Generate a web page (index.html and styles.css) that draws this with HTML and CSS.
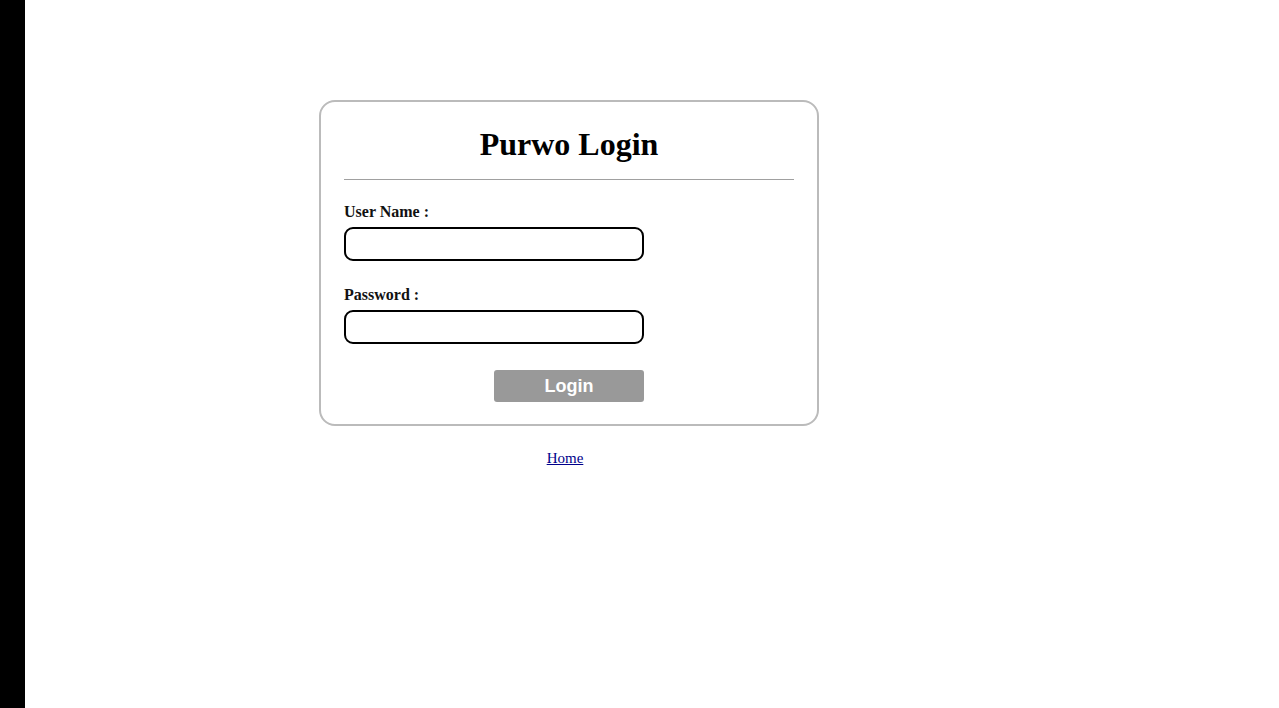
FILE: index.html
```html
<!DOCTYPE html>
<html>
<head>
<meta charset="utf-8">
<title>Purwo Login</title>
<link rel="stylesheet" href="styles.css">
</head>
<body>
<div class="frame">
  <div class="side"></div>
  <main class="main">
    <form class="card" action="#">
      <h1 class="title">Purwo Login</h1>
      <hr class="rule">
      <label class="label" for="user">User Name :</label>
      <input class="field" id="user" type="text">
      <label class="label label-pass" for="pass">Password :</label>
      <input class="field" id="pass" type="password">
      <div class="actions"><button class="btn" type="button">Login</button></div>
    </form>
    <div class="links"><a class="home" href="#">Home</a></div>
  </main>
</div>
</body>
</html>
```
FILE: styles.css
```css
html, body {
  margin: 0;
  padding: 0;
  background: #fff;
  font-family: "Liberation Serif", "Times New Roman", serif;
}
.frame {
  display: flex;
  min-height: 708px;
}
.side {
  width: 25px;
  flex: 0 0 25px;
  background: #000;
}
.main {
  flex: 1;
  padding: 100px 0 0 294px;
}
.card {
  box-sizing: border-box;
  width: 500px;
  border: 2px solid #bbb;
  border-radius: 16px;
  padding: 24px 23px 22px 23px;
  display: flex;
  flex-direction: column;
  align-items: flex-start;
}
.title {
  align-self: stretch;
  margin: 0;
  text-align: center;
  font-size: 32px;
  line-height: 36px;
  font-weight: bold;
  color: #000;
}
.rule {
  align-self: stretch;
  margin: 17px 0 0;
  border: 0;
  border-top: 1px solid #a0a0a0;
  height: 0;
}
.label {
  display: block;
  margin-top: 23px;
  font-size: 16px;
  line-height: 18px;
  font-weight: bold;
  color: #111;
}
.label-pass {
  margin-top: 25px;
}
.field {
  box-sizing: border-box;
  margin-top: 6px;
  width: 300px;
  height: 34px;
  border: 2px solid #000;
  border-radius: 9px;
  background: #fff;
  padding: 0 8px;
  font-size: 15px;
  outline: none;
}
.actions {
  align-self: stretch;
  display: flex;
  justify-content: center;
  margin-top: 26px;
}
.btn {
  width: 150px;
  height: 32px;
  border: 0;
  border-radius: 3px;
  background: #999;
  color: #fff;
  font-family: "Liberation Sans", Arial, sans-serif;
  font-weight: bold;
  font-size: 18px;
  padding: 0;
  cursor: pointer;
}
.links {
  width: 492px;
  text-align: center;
  margin-top: 23px;
  font-size: 15px;
  line-height: 18px;
}
.home {
  color: #00008b;
}
```
